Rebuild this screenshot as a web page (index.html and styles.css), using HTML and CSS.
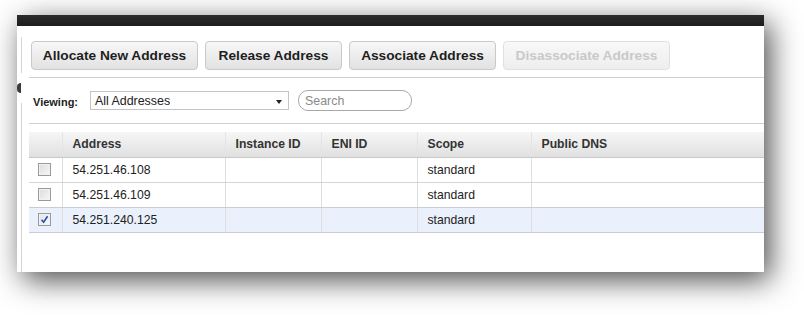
FILE: index.html
```html
<!DOCTYPE html>
<html lang="en">
<head>
    <meta charset="UTF-8">
    <meta name="viewport" content="width=device-width, initial-scale=1.0">
    <title>Elastic IPs</title>
    <link rel="stylesheet" href="styles.css">
</head>
<body>
    <div class="stage">
        <div class="window">
            <div class="topbar"></div>
            <div class="frame">
                <!-- collapsed navigation rail -->
                <div class="rail">
                    <span class="rail-line rail-line-top"></span>
                    <span class="rail-toggle"></span>
                    <span class="rail-line rail-line-bottom"></span>
                </div>

                <div class="main">
                    <div class="toolbar">
                        <button class="btn btn-allocate">Allocate New Address</button>
                        <button class="btn btn-release">Release Address</button>
                        <button class="btn btn-associate">Associate Address</button>
                        <button class="btn btn-disassociate" disabled>Disassociate Address</button>
                    </div>

                    <div class="filter">
                        <label class="filter-label">Viewing:</label>
                        <div class="dropdown">
                            <span>All Addresses</span>
                            <span class="dropdown-arrow"></span>
                        </div>
                        <input type="text" class="search" placeholder="Search">
                    </div>

                    <table class="grid">
                        <thead>
                            <tr>
                                <th class="col-check"></th>
                                <th class="col-address">Address</th>
                                <th class="col-instance">Instance ID</th>
                                <th class="col-eni">ENI ID</th>
                                <th class="col-scope">Scope</th>
                                <th>Public DNS</th>
                            </tr>
                        </thead>
                        <tbody>
                            <tr>
                                <td class="col-check"><span class="check"></span></td>
                                <td>54.251.46.108</td>
                                <td></td>
                                <td></td>
                                <td>standard</td>
                                <td></td>
                            </tr>
                            <tr>
                                <td class="col-check"><span class="check"></span></td>
                                <td>54.251.46.109</td>
                                <td></td>
                                <td></td>
                                <td>standard</td>
                                <td></td>
                            </tr>
                            <tr class="selected">
                                <td class="col-check">
                                    <span class="check checked">
                                        <svg width="9" height="9" viewBox="0 0 9 9"><path d="M1.5 4.8 L3.6 7.2 L7.6 1.2" fill="none" stroke="#2a4fa8" stroke-width="1.6"/></svg>
                                    </span>
                                </td>
                                <td>54.251.240.125</td>
                                <td></td>
                                <td></td>
                                <td>standard</td>
                                <td></td>
                            </tr>
                        </tbody>
                    </table>
                </div>
            </div>
        </div>
    </div>
</body>
</html>
```

FILE: styles.css
```css
* {
    margin: 0;
    padding: 0;
    box-sizing: border-box;
}

html,
body {
    background: #fff;
}

body {
    font-family: 'Liberation Sans', Arial, sans-serif;
    color: #222;
}

.stage {
    min-height: 315px;
    padding: 15px 0 0 17px;
}

.window {
    width: 747px;
    height: 257px;
    background: #fff;
    display: flex;
    flex-direction: column;
    overflow: hidden;
    box-shadow: 6px 8px 28px rgba(0, 0, 0, 0.7);
}

.topbar {
    height: 11px;
    background: linear-gradient(#2b2b2b, #1d1d1d);
}

.frame {
    flex: 1;
    display: flex;
}

/* Rail */
.rail {
    width: 5px;
    display: flex;
    flex-direction: column;
    align-items: flex-end;
    padding-top: 11px;
}

.rail-line {
    width: 1px;
    background: #d4d4d4;
}

.rail-line-top {
    height: 36px;
}

.rail-line-bottom {
    flex: 1;
}

.rail-toggle {
    width: 4px;
    height: 10px;
    margin: 10px 1px 10px 0;
    background: #3c3c3c;
    border-radius: 5px 0 0 5px;
}

/* Main */
.main {
    flex: 1;
    padding-left: 7px;
}

.toolbar {
    display: flex;
    gap: 7px;
    padding: 15px 0 7px 2px;
    border-bottom: 1px solid #cfcfcf;
}

.btn {
    height: 29px;
    padding: 0;
    font-family: 'Liberation Sans', Arial, sans-serif;
    font-size: 13.7px;
    font-weight: bold;
    color: #1e1e1e;
    background: linear-gradient(#f7f7f7, #e2e2e2);
    border: 1px solid #c9c9c9;
    border-radius: 4px;
}

.btn-allocate,
.btn-disassociate {
    width: 167px;
}

.btn-release {
    width: 137px;
}

.btn-associate {
    width: 147px;
}

.btn:disabled {
    color: #c9c9c9;
    background: linear-gradient(#f8f8f8, #eeeeee);
    border-color: #e0e0e0;
}

.filter {
    height: 46px;
    display: flex;
    align-items: center;
    padding-left: 4px;
    border-bottom: 1px solid #cfcfcf;
}

.filter-label {
    font-size: 11px;
    font-weight: bold;
    color: #222;
    margin-right: 12px;
    padding-top: 2px;
}

.dropdown {
    width: 199px;
    height: 19px;
    display: flex;
    align-items: center;
    justify-content: space-between;
    padding: 0 6px 0 4px;
    border: 1px solid #c4c4c4;
    font-size: 12.4px;
    color: #222;
}

.dropdown-arrow {
    width: 0;
    height: 0;
    border-left: 3.5px solid transparent;
    border-right: 3.5px solid transparent;
    border-top: 4px solid #222;
    margin-top: 2px;
}

.search {
    width: 114px;
    height: 21px;
    margin-left: 9px;
    padding: 0 6px;
    border: 1px solid #a8a8a8;
    border-radius: 10px;
    font-family: 'Liberation Sans', Arial, sans-serif;
    font-size: 12.4px;
    outline: none;
}

.search::placeholder {
    color: #8a8a8a;
}

/* Table */
.grid {
    width: 100%;
    margin-top: 8px;
    border-collapse: collapse;
    font-size: 12.2px;
}

.grid th {
    height: 25px;
    padding: 0 10px;
    text-align: left;
    font-weight: bold;
    color: #333;
    background: linear-gradient(#f6f6f6, #e0e0e0);
    border-bottom: 1px solid #c8c8c8;
    border-left: 1px solid #e4e4e4;
}

.grid td {
    height: 25px;
    padding: 0 10px;
    border-bottom: 1px solid #d6d6d6;
    border-left: 1px solid #dedede;
}

.grid th:first-child,
.grid td:first-child {
    border-left: none;
}

.col-check {
    width: 33px;
}

.grid td.col-check {
    padding: 0 0 0 9px;
}

.col-address {
    width: 163px;
}

.col-instance,
.col-eni {
    width: 96px;
}

.col-scope {
    width: 114px;
}

.grid tr.selected td {
    background: #eaf1fc;
    border-bottom-color: #c8ccd4;
}

.grid tbody tr:nth-child(2) td {
    border-bottom-color: #c8ccd4;
}

.check {
    display: flex;
    align-items: center;
    justify-content: center;
    width: 13px;
    height: 13px;
    border: 1px solid #9a9a9a;
    background: linear-gradient(135deg, #dcdcdc, #f7f7f7);
    box-shadow: inset 0 0 0 1px #f2f2f2;
}

.check.checked {
    background: linear-gradient(135deg, #dde4ef, #f7f9fc);
}
```
